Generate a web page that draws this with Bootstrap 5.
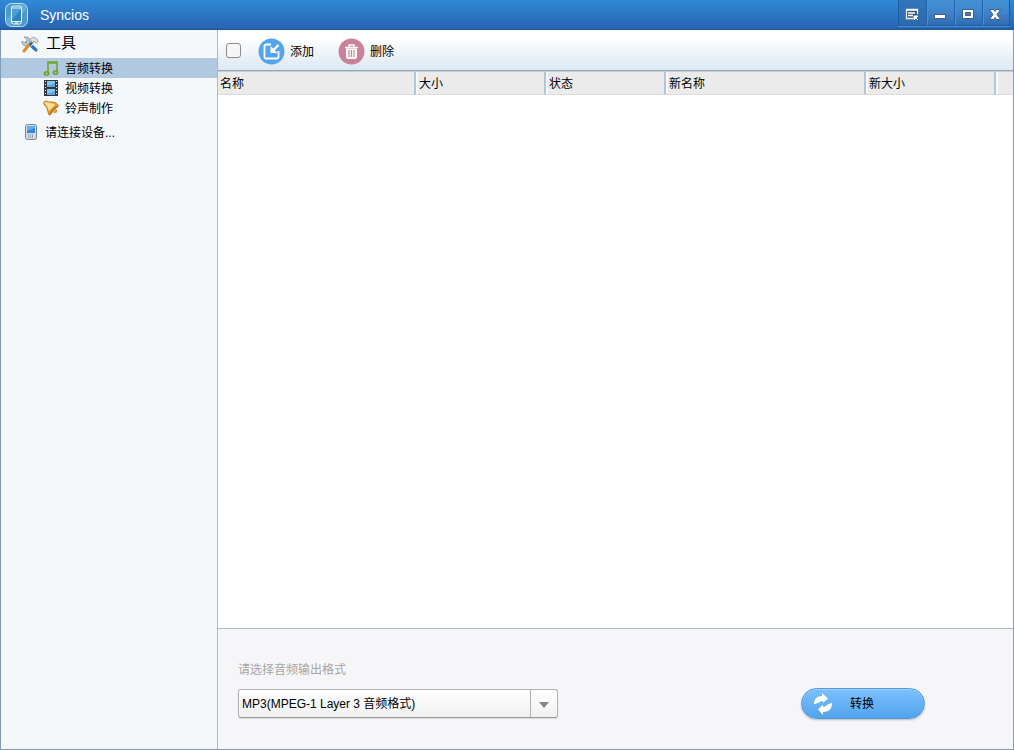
<!DOCTYPE html>
<html lang="zh-CN">
<head>
<meta charset="utf-8">
<meta name="viewport" content="width=device-width, initial-scale=1">
<title>Syncios</title>
<link href="https://cdn.jsdelivr.net/npm/bootstrap@5.3.0/dist/css/bootstrap.min.css" rel="stylesheet">
<style>
body { font: 12px/20px "Liberation Sans", "Noto Sans CJK SC", sans-serif; color: #000; background: #f4f8fb; }
button { font: inherit; color: inherit; border: 0; background: none; padding: 0; }
svg { display: block; flex: none; }
.titlebar { height: 30px; background: linear-gradient(#3189d5, #2765b3 28px, #1c519c); color: #fff; padding-left: 4px; }
.titlebar h1 { font-size: 14px; line-height: 20px; margin-left: 10px; }
.win-controls { height: 26px; margin-right: 4px; border: 1px solid #1c5da3; border-top: 0; box-shadow: 0 1px #4c8fd0; }
.win-controls button { width: 28px; padding: 3px 2px 0 0; background: linear-gradient(#4290d6, #4084c9 50%, #2f6cb2); display: flex; align-items: center; justify-content: center; }
.win-controls button + button { border-left: 1px solid #1f62aa; box-shadow: inset 1px 0 #4b93d6; }
.win-controls button:first-child { width: 27px; background: linear-gradient(#2f76bd, #2f69ac); }
.win-controls button:last-child { width: 27px; }
.frame { border: 1px solid #7d9dba; border-top: 0; }
.sidebar { width: 217px; border-right: 1px solid #a5bbd0; background: #f4f8fb; }
.tree a { color: #000; text-decoration: none; display: flex; align-items: center; height: 20px; padding-left: 42px; gap: 6px; }
.tree a span { padding-top: 2px; }
.tree a.root { height: 28px; padding-left: 20px; font-size: 15px; gap: 7px; }
.tree a.root span { padding-bottom: 4px; }
.tree a.device { height: 28px; padding-left: 24px; gap: 8px; }
.tree a.current { background: #b1c8e1; }
.toolbar { height: 41px; padding: 1px 8px 0; border-bottom: 1px solid #97a7b7; background: linear-gradient(#fff 20%, #dce8f3); }
.toolbar .form-check-input { width: 15px; height: 15px; margin: 0 17px 0 0; border: 1px solid #8c8c8c; border-radius: 3px; background-color: #f6f6f6; }
.toolbar button { display: flex; align-items: center; gap: 5px; margin-right: 24px; padding-top: 2px; }
.files { table-layout: fixed; width: 100%; border-collapse: separate; border-spacing: 0; border-top: 1px solid #c3cdd7; }
.files th { height: 23px; padding: 2px 0 0 3px; font-weight: 400; line-height: 20px; background: #ebebeb; border-right: 2px solid #b3c5da; border-bottom: 1px solid #dcdcdc; box-shadow: inset 2px 0 #fafafa; }
.files th:first-child { padding-left: 2px; box-shadow: none; }
.files th:last-child { border-right: 0; }
.output { height: 121px; padding: 31px 88px 0 20px; background: #f6f6f9; border-top: 1px solid #a5bccf; }
.output label { color: #a6a6a6; margin-bottom: 9px; }
.format { width: 320px; height: 29px; }
.format select { width: 100%; height: 29px; padding: 0 32px 0 3px; font: inherit; color: #000; appearance: none; border: 1px solid #b2b2b4; border-bottom-color: #999; border-radius: 3px; background: linear-gradient(#fff, #f1f1f1); box-shadow: 0 1px 1px #ddd; }
.format::after { content: ""; position: absolute; right: 9px; top: 13px; border: 5px solid transparent; border-bottom: 0; border-top: 6px solid #858588; pointer-events: none; }
.format::before { content: ""; position: absolute; right: 27px; top: 1px; bottom: 1px; border-left: 1px solid #b2b2b4; pointer-events: none; }
.convert { width: 124px; height: 31px; padding-left: 11px; margin-top: 28px; display: flex; align-items: center; gap: 17px; border: 1px solid #5099dc; border-radius: 16px; background: linear-gradient(#7bc0fc, #52a4ef); box-shadow: inset 0 1px #9bd0ff, 0 1px 2px #bbb; }
</style>
</head>
<body class="vh-100 d-flex flex-column overflow-hidden">
<header class="titlebar d-flex align-items-center flex-shrink-0">
  <svg width="26" height="26" viewBox="0 0 26 26"><rect x="1.500" y="1.500" width="22" height="23" rx="6" fill="#4f98ca" stroke="#b9e4fa"/><path d="M2 18 17 2h5v6L6 24H3z" fill="#78b9de" opacity=".6"/><rect x="7.500" y="4" width="10" height="18" rx="2" fill="#4d9ed0" stroke="#e6f8ff"/><path d="M8 18 17 7v12H8z" fill="#3180c0"/><path d="M8 6h9M8 19.500h9" stroke="#dff5ff"/><path d="M11 21h3" stroke="#fff"/></svg>
  <h1 class="mb-0 fw-normal me-auto">Syncios</h1>
  <div class="win-controls d-flex align-self-start">
    <button type="button" aria-label="菜单"><svg width="14" height="13" viewBox="0 0 14 13"><path d="M12.500 6V1.500h-11v9H8" fill="#34577f" stroke="#e8eef4" stroke-width="1.300"/><path d="M1 2h12M3 5h7M3 7.500h5" stroke="#fff" stroke-width="1.300"/><path d="M9 8h4L9 12zM11 10l2 2" fill="#fff" stroke="#fff"/></svg></button>
    <button type="button" aria-label="最小化"><svg width="12" height="12"><rect x=".5" y="6.500" width="11" height="4" fill="#fff" stroke="#435d82"/></svg></button>
    <button type="button" aria-label="最大化"><svg width="12" height="10"><path d="M.5.5h11v9H.5z" fill="#fff" stroke="#435d82"/><path d="M3.500 3.500h5v3h-5z" fill="#4c83be" stroke="#435d82"/></svg></button>
    <button type="button" aria-label="关闭"><svg width="12" height="11" viewBox="0 0 12 11"><path d="M.5.5h4L6 2.500 7.500.5h4L8 5.500l3.500 5h-4L6 8.500l-1.500 2h-4L4 5.500z" fill="#fff" stroke="#435d82"/></svg></button>
  </div>
</header>
<div class="frame d-flex flex-grow-1">
  <nav class="sidebar flex-shrink-0">
    <ul class="tree list-unstyled mb-0">
      <li><a class="root" href="#"><svg width="18" height="17" viewBox="0 0 18 17"><path d="m5 5 11 10" stroke="#58718c" stroke-width="3"/><path d="m5 4 10 10" stroke="#d8e2ea" stroke-width="1.500"/><path d="m3 1 3 2v3L4 7 1 5v3l3 2 4-2 1-3-2-4z" fill="#c5cdd4" stroke="#7c8995" stroke-width=".7"/><path d="m3 15 4-5" stroke="#de8d27" stroke-width="3" stroke-linecap="round"/><path d="m9 9 3-4" stroke="#3c5c84" stroke-width="2.500"/><path d="m9 3 3-2 4 2 1 3-2 1-2-2-2 2z" fill="#dde0e2" stroke="#8c8985" stroke-width=".7"/><path d="m11 10 4 4" stroke="#2873c4" stroke-width="3"/></svg><span>工具</span></a>
        <ul class="list-unstyled mb-0">
          <li><a class="current" href="#" aria-current="page"><svg width="16" height="16" viewBox="0 0 16 16"><path d="M5 13V2h9v10M5 3h9" fill="none" stroke="#6fa52d" stroke-width="1.600"/><ellipse cx="3.500" cy="13.500" rx="2.200" ry="1.700" fill="#a4cb65" stroke="#679d26" stroke-width="1.300"/><ellipse cx="12.500" cy="12.500" rx="2.200" ry="1.700" fill="#a4cb65" stroke="#679d26" stroke-width="1.300"/></svg><span>音频转换</span></a></li>
          <li><a href="#"><svg width="16" height="16" viewBox="0 0 16 16"><path d="M1 0h14v16H1z" fill="#30373e"/><path d="M4 1h8v6H4zM4 9h8v6H4z" fill="#5ba7dd"/><path d="M4 1h8v2L4 6zM4 9h8v2l-8 3z" fill="#86c6ed"/><path d="M2.500 1v15M13.500 1v15" stroke="#e4e8eb" stroke-dasharray="1 2"/></svg><span>视频转换</span></a></li>
          <li><a href="#"><svg width="16" height="16" viewBox="0 0 16 16"><path d="M1 2C2 0 5 2 7 2c3 0 6 0 8 3 1 2-1 2-2 3-3 1-3 2-4 4 0 2-2 3-3 3-1-2-1-4-2-7C3 6 0 5 1 2z" fill="#e5a438" stroke="#b9781f"/><path d="M2 2c3 1 7 0 10 3L6 11C5 9 5 7 3 5 2 4 1 3 2 2z" fill="#fbdc96"/><path d="m7 14 2-4 5-4" fill="none" stroke="#b57419" stroke-width="1.300"/><circle cx="12" cy="11" r="1.800" fill="#e7a83c" stroke="#b87820" stroke-width=".6"/></svg><span>铃声制作</span></a></li>
        </ul>
      </li>
      <li><a class="device" href="#"><svg width="12" height="16" viewBox="0 0 12 16"><rect x=".5" y=".5" width="11" height="15" rx="2" fill="#d3dae2" stroke="#74879e"/><path d="M2 2h8v7H2z" fill="#3086e1"/><path d="M2 2h8v2L2 7z" fill="#63adf2"/><path d="M3 11h6M3 13h6" stroke="#60748d" stroke-dasharray="1 1"/></svg><span>请连接设备...</span></a></li>
    </ul>
  </nav>
  <main class="flex-grow-1 d-flex flex-column bg-white">
    <div class="toolbar d-flex align-items-center flex-shrink-0">
      <input class="form-check-input" type="checkbox" aria-label="全选">
      <button type="button"><svg width="27" height="27" viewBox="0 0 27 27"><circle cx="13.500" cy="13.500" r="13" fill="#55a5ee"/><path d="M13 6.500H8Q6.500 6.500 6.500 8v11q0 1.500 1.500 1.500h11q1.500 0 1.500-1.500v-6" fill="none" stroke="#fff" stroke-width="1.800"/><path d="m20.500 7-5 5" stroke="#fff" stroke-width="2.400"/><path d="M12.500 8v7h7z" fill="#fff"/></svg><span>添加</span></button>
      <button type="button"><svg width="27" height="27" viewBox="0 0 27 27"><circle cx="13.500" cy="13.500" r="13" fill="#ca819a"/><path d="M7 9.500h13M11 9V7h5v2" fill="none" stroke="#fff" stroke-width="1.500"/><path d="M8 10.500h11V19q0 2-2 2h-7q-2 0-2-2z" fill="#fff"/><path d="M11 12v7M13.500 12v7M16 12v7" stroke="#ca819a" stroke-width="1.200"/></svg><span>删除</span></button>
    </div>
    <div class="flex-grow-1">
      <table class="files">
        <colgroup><col style="width:198px"><col style="width:130px"><col style="width:120px"><col style="width:200px"><col style="width:130px"><col></colgroup>
        <thead><tr><th>名称</th><th>大小</th><th>状态</th><th>新名称</th><th>新大小</th><th></th></tr></thead>
      </table>
    </div>
    <form class="output d-flex justify-content-between align-items-start flex-shrink-0">
      <div>
        <label class="d-block" for="format">请选择音频输出格式</label>
        <div class="format position-relative"><select id="format"><option>MP3(MPEG-1 Layer 3 音频格式)</option></select></div>
      </div>
      <button class="convert" type="button"><svg width="20" height="22" viewBox="0 0 20 22"><path d="M1 11C1 6 4 3 9 3V0l6 5.500L10 10V8C7 7.500 5 11 1 11z" fill="#fff"/><path d="M19 10c0 6-3 9-9 9v3l-5-5.500 5-5V14c3 0 5-4 9-4z" fill="#fff"/></svg><span>转换</span></button>
    </form>
  </main>
</div>
<script src="https://cdn.jsdelivr.net/npm/bootstrap@5.3.0/dist/js/bootstrap.bundle.min.js"></script>
</body>
</html>
